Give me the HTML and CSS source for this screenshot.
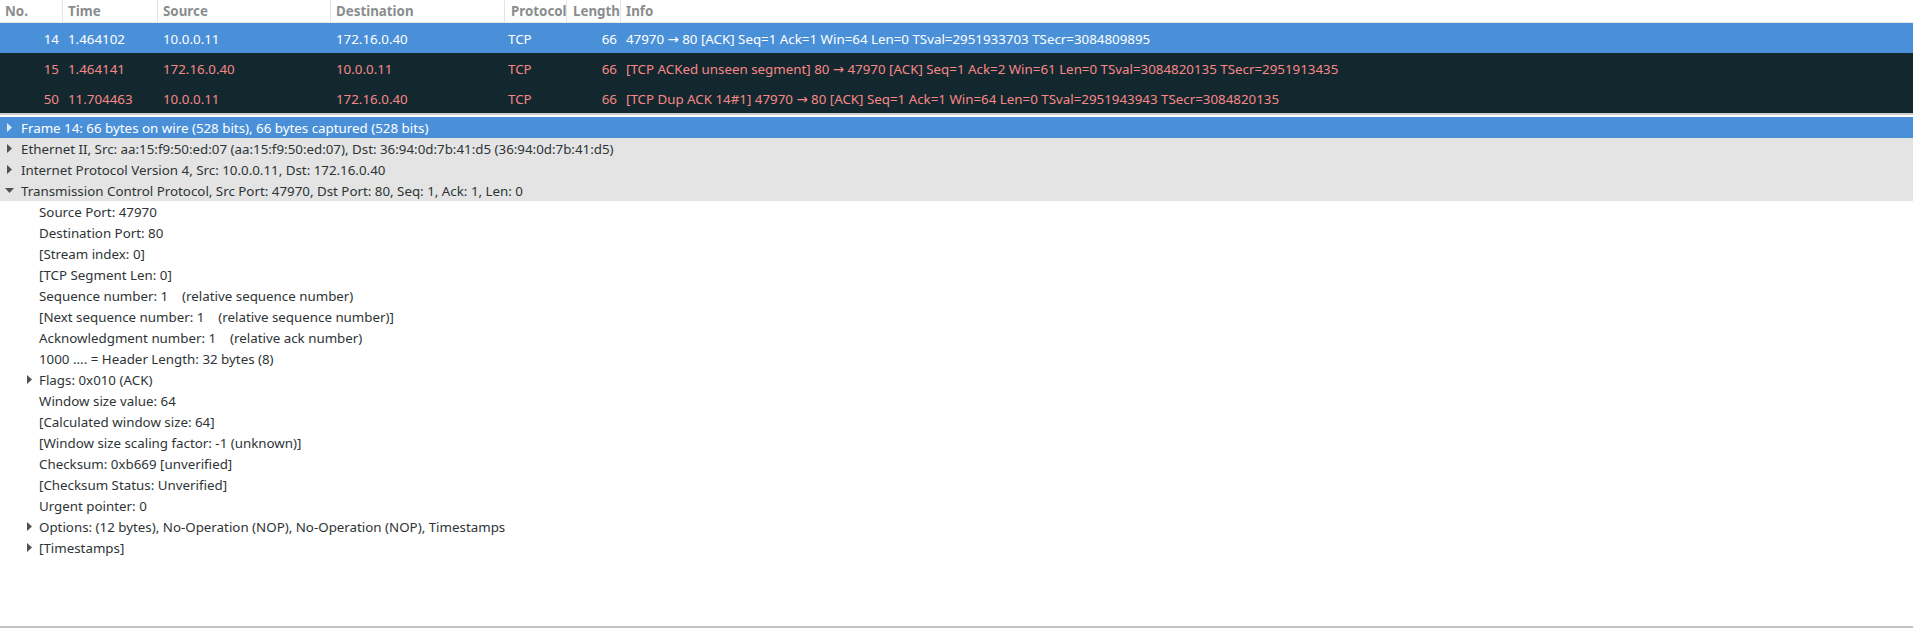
FILE: index.html
```html
<!DOCTYPE html>
<html>
<head>
<meta charset="utf-8">
<link rel="stylesheet" href="styles.css">
</head>
<body>
<div class="app">
  <div class="plist">
    <div class="phead">
      <div class="hc c-no">No.</div>
      <div class="hc c-time">Time</div>
      <div class="hc c-src">Source</div>
      <div class="hc c-dst">Destination</div>
      <div class="hc c-proto">Protocol</div>
      <div class="hc c-len">Length</div>
      <div class="hc c-info">Info</div>
    </div>
    <div class="prow sel">
      <div class="pc c-no">14</div>
      <div class="pc c-time">1.464102</div>
      <div class="pc c-src">10.0.0.11</div>
      <div class="pc c-dst">172.16.0.40</div>
      <div class="pc c-proto">TCP</div>
      <div class="pc c-len">66</div>
      <div class="pc c-info">47970 → 80 [ACK] Seq=1 Ack=1 Win=64 Len=0 TSval=2951933703 TSecr=3084809895</div>
    </div>
    <div class="prow bad">
      <div class="pc c-no">15</div>
      <div class="pc c-time">1.464141</div>
      <div class="pc c-src">172.16.0.40</div>
      <div class="pc c-dst">10.0.0.11</div>
      <div class="pc c-proto">TCP</div>
      <div class="pc c-len">66</div>
      <div class="pc c-info">[TCP ACKed unseen segment] 80 → 47970 [ACK] Seq=1 Ack=2 Win=61 Len=0 TSval=3084820135 TSecr=2951913435</div>
    </div>
    <div class="prow bad">
      <div class="pc c-no">50</div>
      <div class="pc c-time">11.704463</div>
      <div class="pc c-src">10.0.0.11</div>
      <div class="pc c-dst">172.16.0.40</div>
      <div class="pc c-proto">TCP</div>
      <div class="pc c-len">66</div>
      <div class="pc c-info">[TCP Dup ACK 14#1] 47970 → 80 [ACK] Seq=1 Ack=1 Win=64 Len=0 TSval=2951943943 TSecr=3084820135</div>
    </div>
  </div>
  <div class="splitter"></div>
  <div class="tree">
    <div class="trow top sel"><span class="tw"><svg width="5" height="9" viewBox="0 0 5 9"><path d="M0 0L5 4.5L0 9Z"/></svg></span><span class="tt">Frame 14: 66 bytes on wire (528 bits), 66 bytes captured (528 bits)</span></div>
    <div class="trow top hl"><span class="tw"><svg width="5" height="9" viewBox="0 0 5 9"><path d="M0 0L5 4.5L0 9Z"/></svg></span><span class="tt">Ethernet II, Src: aa:15:f9:50:ed:07 (aa:15:f9:50:ed:07), Dst: 36:94:0d:7b:41:d5 (36:94:0d:7b:41:d5)</span></div>
    <div class="trow top hl"><span class="tw"><svg width="5" height="9" viewBox="0 0 5 9"><path d="M0 0L5 4.5L0 9Z"/></svg></span><span class="tt">Internet Protocol Version 4, Src: 10.0.0.11, Dst: 172.16.0.40</span></div>
    <div class="trow top hl"><span class="tw"><svg width="9" height="5" viewBox="0 0 9 5"><path d="M0 0L9 0L4.5 5Z"/></svg></span><span class="tt">Transmission Control Protocol, Src Port: 47970, Dst Port: 80, Seq: 1, Ack: 1, Len: 0</span></div>
    <div class="trow child"><span class="tw"></span><span class="tt">Source Port: 47970</span></div>
    <div class="trow child"><span class="tw"></span><span class="tt">Destination Port: 80</span></div>
    <div class="trow child"><span class="tw"></span><span class="tt">[Stream index: 0]</span></div>
    <div class="trow child"><span class="tw"></span><span class="tt">[TCP Segment Len: 0]</span></div>
    <div class="trow child"><span class="tw"></span><span class="tt">Sequence number: 1    (relative sequence number)</span></div>
    <div class="trow child"><span class="tw"></span><span class="tt">[Next sequence number: 1    (relative sequence number)]</span></div>
    <div class="trow child"><span class="tw"></span><span class="tt">Acknowledgment number: 1    (relative ack number)</span></div>
    <div class="trow child"><span class="tw"></span><span class="tt">1000 .... = Header Length: 32 bytes (8)</span></div>
    <div class="trow child"><span class="tw"><svg width="5" height="9" viewBox="0 0 5 9"><path d="M0 0L5 4.5L0 9Z"/></svg></span><span class="tt">Flags: 0x010 (ACK)</span></div>
    <div class="trow child"><span class="tw"></span><span class="tt">Window size value: 64</span></div>
    <div class="trow child"><span class="tw"></span><span class="tt">[Calculated window size: 64]</span></div>
    <div class="trow child"><span class="tw"></span><span class="tt">[Window size scaling factor: -1 (unknown)]</span></div>
    <div class="trow child"><span class="tw"></span><span class="tt">Checksum: 0xb669 [unverified]</span></div>
    <div class="trow child"><span class="tw"></span><span class="tt">[Checksum Status: Unverified]</span></div>
    <div class="trow child"><span class="tw"></span><span class="tt">Urgent pointer: 0</span></div>
    <div class="trow child"><span class="tw"><svg width="5" height="9" viewBox="0 0 5 9"><path d="M0 0L5 4.5L0 9Z"/></svg></span><span class="tt">Options: (12 bytes), No-Operation (NOP), No-Operation (NOP), Timestamps</span></div>
    <div class="trow child"><span class="tw"><svg width="5" height="9" viewBox="0 0 5 9"><path d="M0 0L5 4.5L0 9Z"/></svg></span><span class="tt">[Timestamps]</span></div>
  </div>
</div>
</body>
</html>
```

FILE: styles.css
```css
html, body {
  margin: 0;
  padding: 0;
  background: #ffffff;
}
body {
  font-family: "Noto Sans", "DejaVu Sans", sans-serif;
  font-size: 13.33px;
  color: #2e3436;
  width: 1913px;
  height: 628px;
  overflow: hidden;
}
.app {
  display: flex;
  flex-direction: column;
  height: 628px;
}
.plist {
  display: flex;
  flex-direction: column;
}
.phead {
  display: flex;
  height: 22px;
  border-bottom: 1px solid #e6e6e6;
  background: #ffffff;
}
.hc {
  box-sizing: border-box;
  display: flex;
  align-items: center;
  padding-left: 5px;
  color: #8a8d8e;
  font-weight: bold;
  border-right: 1px solid #e4e4e4;
  white-space: nowrap;
  overflow: hidden;
}
.hc.c-info { border-right: none; }
.c-no { width: 63px; flex: none; }
.c-time { width: 95px; flex: none; }
.c-src { width: 173px; flex: none; }
.c-dst { width: 174px; flex: none; }
.c-proto { width: 62px; flex: none; }
.c-len { width: 54px; flex: none; }
.c-info { flex: 1; }
.hc.c-proto { padding-left: 6px; }
.hc.c-len { padding-left: 6px; }
.prow {
  display: flex;
  height: 30px;
  align-items: center;
  padding-top: 1px;
  box-sizing: border-box;
}
.prow.sel { background: #4a90d9; color: #ffffff; }
.prow.bad { background: #12272e; color: #f78787; }
.pc {
  box-sizing: border-box;
  padding-left: 5px;
  white-space: nowrap;
  overflow: hidden;
}
.pc.c-no { text-align: right; padding-right: 4px; padding-left: 0; }
.pc.c-len { text-align: right; padding-right: 4px; padding-left: 0; }
.pc.c-proto { padding-left: 3px; }
.splitter {
  height: 4px;
  box-sizing: border-box;
  border-top: 2px solid #cdcdcd;
  background: #ffffff;
}
.tree {
  flex: 1;
  display: flex;
  flex-direction: column;
  border-bottom: 2px solid #c2c2c2;
}
.trow {
  display: flex;
  align-items: center;
  height: 21px;
  white-space: pre;
}
.trow.sel { background: #4a90d9; color: #ffffff; }
.trow.sel svg { fill: #dbe8f6; }
.trow.hl { background: #e4e4e4; }
.tw {
  display: flex;
  align-items: center;
  justify-content: center;
  width: 10px;
  flex: none;
}
.tw svg { fill: #4f5253; }
.trow.top { padding-left: 4px; }
.trow.top .tw { margin-right: 7px; }
.trow.child { padding-left: 24px; }
.trow.child .tw { margin-right: 5px; }
```
